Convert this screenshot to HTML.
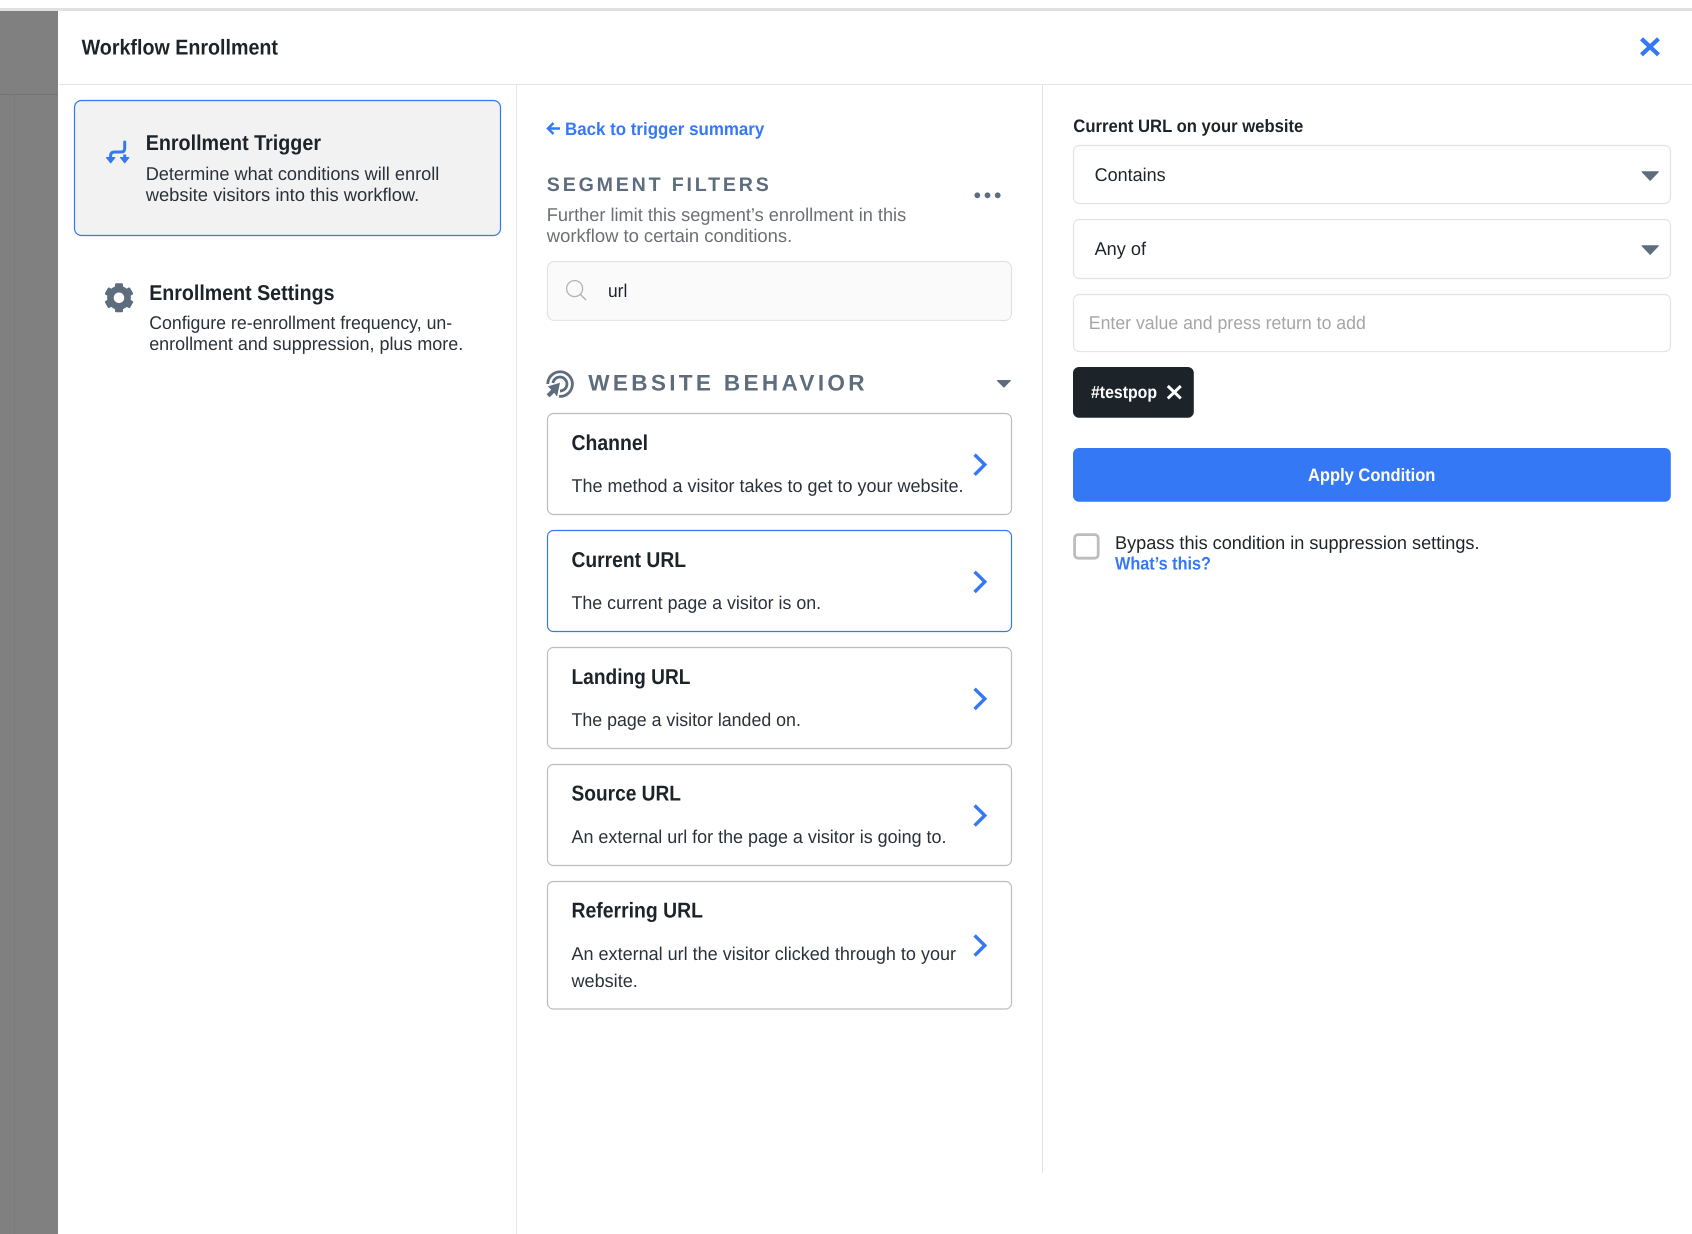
<!DOCTYPE html>
<html lang="en">
<head>
<meta charset="utf-8">
<title>Workflow Enrollment</title>
<style>
html,body{margin:0;padding:0;background:#fff;width:1692px;height:1234px;overflow:hidden}
svg{display:block}
text{font-family:"Liberation Sans",sans-serif;text-rendering:geometricPrecision}
.t{font-size:21.5px;font-weight:700;fill:#1c2329}
.d{font-size:18.5px;fill:#2a3138}
.s{font-size:18px;font-weight:700;fill:#1c2329}
</style>
</head>
<body>
<svg xmlns="http://www.w3.org/2000/svg" width="1692" height="1234" viewBox="0 0 1692 1234">
<rect width="1692" height="1234" fill="#fff"/>
<!-- backdrop -->
<rect x="0" y="10" width="58" height="1224" fill="#808080"/>
<rect x="0" y="94" width="58" height="1" fill="#747474"/>
<rect x="14" y="95" width="1" height="1139" fill="#7a7a7a"/>
<rect x="0" y="8" width="1692" height="3" fill="#e0e0e0"/>
<!-- header + dividers -->
<rect x="59" y="84" width="1633" height="1" fill="#e3e3e3"/>
<rect x="516" y="85" width="1" height="1149" fill="#e6e6e6"/>
<rect x="1042" y="85" width="1" height="1088" fill="#e3e3e3"/>
<text x="81.6" y="54.6" class="t" textLength="196.4" lengthAdjust="spacingAndGlyphs">Workflow Enrollment</text>
<path d="M1641.5 38.8 L1658.5 54.8 M1658.5 38.8 L1641.5 54.8" stroke="#3578f6" stroke-width="4.2" fill="none"/>

<!-- left column -->
<rect x="74.5" y="100.5" width="426" height="135" rx="7" fill="#f2f2f2" stroke="#3578f6" stroke-width="1.2"/>
<path d="M124.7 142 V148.5 Q124.7 152 121 152 H114.5 Q110.6 152 110.6 156 V159" stroke="#3578f6" stroke-width="3" fill="none" stroke-linecap="round"/>
<path d="M124.7 154.5 V159" stroke="#3578f6" stroke-width="3" fill="none"/>
<path d="M106.6 157.6 H114.8 L110.7 162.8 Z M120.6 157.6 H128.8 L124.7 162.8 Z" fill="#3578f6" stroke="#3578f6" stroke-width="1.2" stroke-linejoin="round"/>
<text x="145.7" y="149.8" class="t" textLength="175.3" lengthAdjust="spacingAndGlyphs">Enrollment Trigger</text>
<text x="145.7" y="179.8" class="d" textLength="293.6" lengthAdjust="spacingAndGlyphs">Determine what conditions will enroll</text>
<text x="145.7" y="200.8" class="d" textLength="273.6" lengthAdjust="spacingAndGlyphs">website visitors into this workflow.</text>

<g transform="translate(119 297.8)" fill="#5e6d7e">
<circle r="8.6" fill="none" stroke="#5e6d7e" stroke-width="6.6"/>
<rect x="-4" y="-14.5" width="8" height="6" rx="1.2"/>
<rect x="-4" y="-14.5" width="8" height="6" rx="1.2" transform="rotate(60)"/>
<rect x="-4" y="-14.5" width="8" height="6" rx="1.2" transform="rotate(120)"/>
<rect x="-4" y="-14.5" width="8" height="6" rx="1.2" transform="rotate(180)"/>
<rect x="-4" y="-14.5" width="8" height="6" rx="1.2" transform="rotate(240)"/>
<rect x="-4" y="-14.5" width="8" height="6" rx="1.2" transform="rotate(300)"/>
</g>
<text x="149.2" y="299.8" class="t" textLength="185.3" lengthAdjust="spacingAndGlyphs">Enrollment Settings</text>
<text x="149.2" y="329" class="d" textLength="303" lengthAdjust="spacingAndGlyphs">Configure re-enrollment frequency, un-</text>
<text x="149.2" y="350" class="d" textLength="314" lengthAdjust="spacingAndGlyphs">enrollment and suppression, plus more.</text>

<!-- middle column -->
<path d="M560 128.5 H548.5 M553.5 123 L548 128.5 L553.5 134" stroke="#3578f6" stroke-width="2.5" fill="none"/>
<text x="565" y="134.8" font-size="18" font-weight="700" fill="#3578f6" textLength="199.3" lengthAdjust="spacingAndGlyphs">Back to trigger summary</text>
<text x="546.8" y="191" font-size="19.6" font-weight="700" fill="#5e6d7e" textLength="222" lengthAdjust="spacing">SEGMENT FILTERS</text>
<text x="546.8" y="221.2" class="d" style="fill:#6b6f73" textLength="359.4" lengthAdjust="spacingAndGlyphs">Further limit this segment’s enrollment in this</text>
<text x="546.8" y="242" class="d" style="fill:#6b6f73" textLength="245.4" lengthAdjust="spacingAndGlyphs">workflow to certain conditions.</text>
<circle cx="977.3" cy="195.3" r="2.9" fill="#5e6d7e"/>
<circle cx="987.5" cy="195.3" r="2.9" fill="#5e6d7e"/>
<circle cx="997.7" cy="195.3" r="2.9" fill="#5e6d7e"/>

<rect x="547.5" y="261.5" width="464" height="59" rx="7" fill="#fafafa" stroke="#e3e3e3" stroke-width="1.2"/>
<circle cx="574.6" cy="288.6" r="8" fill="none" stroke="#b4b4b4" stroke-width="1.3"/>
<path d="M580.5 294.5 L586 300" stroke="#b4b4b4" stroke-width="1.5" fill="none"/>
<text x="608" y="296.8" class="d" style="fill:#1c2329" textLength="19.3" lengthAdjust="spacingAndGlyphs">url</text>

<path d="M547.8 384 A12.3 12.3 0 1 1 559 396.3" stroke="#5e6d7e" stroke-width="2.8" fill="none"/>
<path d="M553 383 A7 7 0 1 1 560 391" stroke="#5e6d7e" stroke-width="2.8" fill="none"/>
<path d="M560 382.8 L547.8 386.4 L551.2 389.8 L546.6 394.4 L549.6 397.4 L554.2 392.8 L557 396.8 Z" fill="#5e6d7e"/>
<text x="588.2" y="390.4" font-size="22.6" font-weight="700" fill="#5e6d7e" textLength="276.4" lengthAdjust="spacing">WEBSITE BEHAVIOR</text>
<path d="M997.5 380.6 H1010.2 L1003.9 387 Z" fill="#5e6d7e" stroke="#5e6d7e" stroke-width="1.2" stroke-linejoin="round"/>

<!-- cards -->
<rect x="547.5" y="413.5" width="464" height="101" rx="6" fill="#fff" stroke="#bdbdbd" stroke-width="1.2"/>
<text x="571.5" y="449.8" class="t" textLength="76.5" lengthAdjust="spacingAndGlyphs">Channel</text>
<text x="571.5" y="492.2" class="d" textLength="392" lengthAdjust="spacingAndGlyphs">The method a visitor takes to get to your website.</text>
<path d="M974.6 454.6 L984.8 464.6 L974.6 474.8" stroke="#3578f6" stroke-width="3.4" fill="none"/>

<rect x="547.5" y="530.5" width="464" height="101" rx="6" fill="#fff" stroke="#3578f6" stroke-width="1.2"/>
<text x="571.5" y="566.8" class="t" textLength="114.5" lengthAdjust="spacingAndGlyphs">Current URL</text>
<text x="571.5" y="609.2" class="d" textLength="249.6" lengthAdjust="spacingAndGlyphs">The current page a visitor is on.</text>
<path d="M974.6 571.8 L984.8 581.8 L974.6 592" stroke="#3578f6" stroke-width="3.4" fill="none"/>

<rect x="547.5" y="647.5" width="464" height="101" rx="6" fill="#fff" stroke="#bdbdbd" stroke-width="1.2"/>
<text x="571.5" y="683.8" class="t" textLength="119" lengthAdjust="spacingAndGlyphs">Landing URL</text>
<text x="571.5" y="726.2" class="d" textLength="229.4" lengthAdjust="spacingAndGlyphs">The page a visitor landed on.</text>
<path d="M974.6 688.8 L984.8 698.8 L974.6 709" stroke="#3578f6" stroke-width="3.4" fill="none"/>

<rect x="547.5" y="764.5" width="464" height="101" rx="6" fill="#fff" stroke="#bdbdbd" stroke-width="1.2"/>
<text x="571.5" y="800.6" class="t" textLength="109.5" lengthAdjust="spacingAndGlyphs">Source URL</text>
<text x="571.5" y="843" class="d" textLength="375" lengthAdjust="spacingAndGlyphs">An external url for the page a visitor is going to.</text>
<path d="M974.6 805.4 L984.8 815.5 L974.6 825.6" stroke="#3578f6" stroke-width="3.4" fill="none"/>

<rect x="547.5" y="881.5" width="464" height="127.5" rx="6" fill="#fff" stroke="#bdbdbd" stroke-width="1.2"/>
<text x="571.5" y="917.5" class="t" textLength="131.5" lengthAdjust="spacingAndGlyphs">Referring URL</text>
<text x="571.5" y="959.8" class="d" textLength="384.5" lengthAdjust="spacingAndGlyphs">An external url the visitor clicked through to your</text>
<text x="571.5" y="986.8" class="d" textLength="66.3" lengthAdjust="spacingAndGlyphs">website.</text>
<path d="M974.6 935.4 L984.8 945.5 L974.6 955.6" stroke="#3578f6" stroke-width="3.4" fill="none"/>

<!-- right column -->
<text x="1073.3" y="131.8" class="s" textLength="230" lengthAdjust="spacingAndGlyphs">Current URL on your website</text>
<rect x="1073.5" y="145.5" width="597" height="58" rx="6" fill="#fff" stroke="#e3e3e3" stroke-width="1.2"/>
<text x="1094.6" y="180.8" class="d" style="fill:#1c2329" textLength="71" lengthAdjust="spacingAndGlyphs">Contains</text>
<path d="M1642 171.8 H1658.4 L1650.2 180.4 Z" fill="#5e6d7e" stroke="#5e6d7e" stroke-width="1" stroke-linejoin="round"/>

<rect x="1073.5" y="219.5" width="597" height="59" rx="6" fill="#fff" stroke="#e3e3e3" stroke-width="1.2"/>
<text x="1094.6" y="255" class="d" style="fill:#1c2329" textLength="51.4" lengthAdjust="spacingAndGlyphs">Any of</text>
<path d="M1642 245.8 H1658.4 L1650.2 254.4 Z" fill="#5e6d7e" stroke="#5e6d7e" stroke-width="1" stroke-linejoin="round"/>

<rect x="1073.5" y="294.5" width="597" height="57" rx="6" fill="#fff" stroke="#e3e3e3" stroke-width="1.2"/>
<text x="1088.8" y="328.9" class="d" style="fill:#a5a5a5" textLength="277" lengthAdjust="spacingAndGlyphs">Enter value and press return to add</text>

<rect x="1073" y="367" width="120.8" height="50.7" rx="6" fill="#1c2329"/>
<text x="1091" y="398" font-size="17.5" font-weight="700" fill="#fff" textLength="66" lengthAdjust="spacingAndGlyphs">#testpop</text>
<path d="M1167.8 386 L1180.8 398.4 M1180.8 386 L1167.8 398.4" stroke="#fff" stroke-width="3" fill="none"/>

<rect x="1073" y="448" width="597.8" height="53.7" rx="6" fill="#3578f6"/>
<text x="1308" y="480.8" font-size="18" font-weight="700" fill="#fff" textLength="127.4" lengthAdjust="spacingAndGlyphs">Apply Condition</text>

<rect x="1074.6" y="534.6" width="23.6" height="23.6" rx="3.5" fill="#fff" stroke="#bdbdbd" stroke-width="2.8"/>
<text x="1115" y="549" class="d" style="fill:#1c2329" textLength="364.5" lengthAdjust="spacingAndGlyphs">Bypass this condition in suppression settings.</text>
<text x="1115" y="569.7" font-size="18" font-weight="700" fill="#3578f6" textLength="96" lengthAdjust="spacingAndGlyphs">What’s this?</text>
</svg>
</body>
</html>
